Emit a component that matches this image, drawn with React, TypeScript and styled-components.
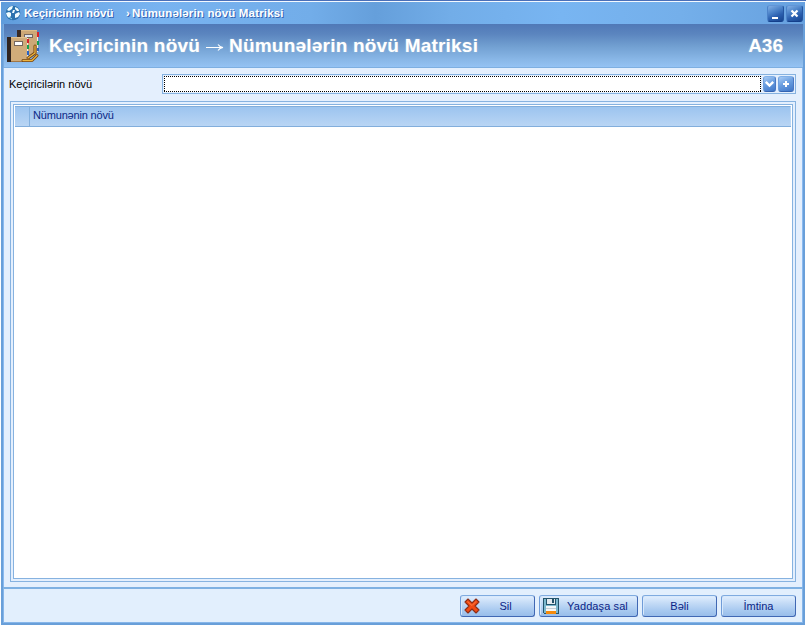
import React from "react";
import styled, { createGlobalStyle } from "styled-components";

const Global = createGlobalStyle`
  * { box-sizing: border-box; }
  body { margin: 0; background: #fff; overflow: hidden; }
`;

const Window = styled.div`
  width: 806px;
  height: 626px;
  display: flex;
  flex-direction: column;
  padding: 0 1px 1px;
  background: #fff;
  font-family: "Liberation Sans", Arial, sans-serif;
  font-size: 11px;
  color: #000;
  border-top: 1px solid #4a6fb8;
`;

const TitleBar = styled.header`
  flex: none;
  height: 23px;
  display: flex;
  align-items: center;
  padding: 0 2px 0 4px;
  border-top: 1px solid #f4f9ff;
  background: linear-gradient(90deg, #5f9cdb 0, #6faae8 60px, #78b3f0 160px, #72ade9 310px, #659fdb 375px, #72ade8 450px, #78b5f2 560px, #74afea 680px, #67a1df 804px);
`;

const TitleText = styled.h1`
  flex: 1;
  display: flex;
  margin: 0 0 0 3px;
  font-size: 11.5px;
  line-height: 20px;
  font-weight: bold;
  color: #fff;
  white-space: pre;
  text-shadow: 1px 1px 0 #3565b4;
`;

const TitlePart = styled.span<{ $w: number; $s?: number }>`
  display: block;
  width: ${(p) => p.$w}px;
  letter-spacing: ${(p) => p.$s ?? 0}px;
`;

const GlossButton = styled.button<{ $w: number; $h: number; $deep?: boolean }>`
  width: ${(p) => p.$w}px;
  height: ${(p) => p.$h}px;
  flex: none;
  padding: 0;
  display: flex;
  align-items: center;
  justify-content: center;
  border-radius: 3px;
  border: 1px solid;
  border-color: ${(p) => (p.$deep ? "#6195d7 #2455a0 #143f8b #4d83c9" : "#7fafe8 #4a78c4 #3564b2 #6f9fde")};
  background: ${(p) =>
    p.$deep
      ? "linear-gradient(155deg, #82b0e6 0%, #4b82c8 38%, #2a5eae 65%, #17458f 100%)"
      : "linear-gradient(155deg, #a9ccf5 0%, #6a9ee0 45%, #3f76c8 100%)"};

  svg { flex: none; }
`;

const WindowControls = styled.div`
  display: flex;
  gap: 2px;
`;

const Frame = styled.main`
  flex: 1;
  min-height: 0;
  display: flex;
  flex-direction: column;
  border: 2px solid #699fd9;
  border-top: 0;
`;

const Banner = styled.div`
  flex: none;
  height: 44px;
  display: flex;
  align-items: center;
  padding: 0 20px 0 3px;
  border-bottom: 1px solid #7eafe1;
  border-left: 1px solid #78abe0;
  background: linear-gradient(#5079b7 0, #5b85bf 10px, #719fd1 22px, #88b6e6 35px, #94c2f3 100%);
`;

const BannerText = styled.div<{ $s?: number }>`
  font-size: 19px;
  line-height: 42px;
  font-weight: bold;
  color: #fff;
  letter-spacing: ${(p) => p.$s ?? 0}px;
  white-space: pre;
  text-shadow: 0 0 2px rgba(190, 205, 210, 0.55);
`;

const BannerTitle = styled.div`
  flex: 1;
  display: flex;
  margin-left: 9px;
`;

const ArrowSlot = styled.span`
  width: 29px;
  display: flex;
  align-items: center;
  justify-content: center;
  padding-top: 4px;
`;

const Body = styled.section`
  flex: 1;
  min-height: 0;
  display: flex;
  flex-direction: column;
  padding: 6px 6px 5px;
  background: #e4effd;
  border: 1px solid #8abaf0;
  border-width: 0 1px;
`;

const Field = styled.div`
  flex: none;
  height: 20px;
  display: flex;
  align-items: center;
`;

const FieldLabel = styled.label`
  width: 152px;
  margin-left: -1px;
  line-height: 20px;
`;

const Combo = styled.div`
  flex: 1;
  height: 20px;
  display: flex;
  gap: 2px;
  padding: 1px;
  margin-left: 1px;
  border: 1px solid #86b2e0;
`;

const dots = (dir: string) => `repeating-linear-gradient(${dir}, #000 0 1px, #fff 1px 2px)`;

const ComboInput = styled.div`
  flex: 1;
  height: 16px;
  background:
    ${dots("90deg")} 0 0 / 100% 1px no-repeat,
    ${dots("90deg")} 0 100% / 100% 1px no-repeat,
    ${dots("180deg")} 0 0 / 1px 100% no-repeat,
    ${dots("180deg")} 100% 0 / 1px 100% no-repeat,
    #fff;
`;

const GridFrame = styled.div`
  flex: 1;
  min-height: 0;
  display: flex;
  margin-top: 7px;
  padding: 2px;
  border: 1px solid #86b2e0;
`;

const GridTable = styled.div`
  flex: 1;
  display: flex;
  flex-direction: column;
  border: 1px solid #86b2e0;
  background: #fff;
`;

const GridHeader = styled.div`
  flex: none;
  height: 22px;
  display: flex;
  margin: 0 1px;
  border-top: 1px solid #fff;
  border-bottom: 1px solid #82aedc;
`;

const HeaderCell = styled.div<{ $w?: number }>`
  flex: ${(p) => (p.$w ? "none" : 1)};
  width: ${(p) => (p.$w ? `${p.$w}px` : "auto")};
  padding-left: ${(p) => (p.$w ? 0 : 3)}px;
  border-top: 1px solid #82aedc;
  border-right: 1px solid ${(p) => (p.$w ? "#83b0de" : "#bcd7f5")};
  background: linear-gradient(#9cc4ef, #b9d5f4);
  color: #0a2886;
  line-height: 17px;
  letter-spacing: -0.17px;
`;

const Footer = styled.footer`
  flex: none;
  height: 36px;
  display: flex;
  justify-content: flex-end;
  gap: 4px;
  padding: 6px 6px 0 0;
  border: 1px solid #86b6ea;
  border-top: 2px solid #7eb0e2;
  background: #e2effd;
`;

const ActionButton = styled.button<{ $w?: number }>`
  width: ${(p) => p.$w ?? 75}px;
  height: 22px;
  display: flex;
  align-items: center;
  padding: 0 3px;
  border: 1px solid;
  border-color: #7fabe0 #4068b4 #4068b4 #6f9cd8;
  border-radius: 3px;
  background: linear-gradient(#e2effe 0, #c4dbf6 35%, #a9caf0 70%, #98bdea 100%);
  box-shadow: inset 1px 1px 0 #d8e9fc;
  color: #0a1f86;
  font: 11px "Liberation Sans", Arial, sans-serif;
`;

const ActionLabel = styled.span<{ $s?: number; $shift?: number }>`
  flex: 1;
  text-align: center;
  letter-spacing: ${(p) => p.$s ?? 0}px;
  padding-left: ${(p) => p.$shift ?? 0}px;
  white-space: nowrap;
`;

const GlobeIcon = () => (
  <svg width="16" height="16" viewBox="0 0 16 16">
    <circle cx="8" cy="8" r="7.3" fill="#2b72ae" />
    <path d="M2 5Q4 1 8 1L7 4 4 6ZM10 2Q14 3 14 6L12 6 10 4ZM1 8L4 7 6 8 6 11 4 13 2 11ZM8 5L10 5 9 8 7 8ZM10 9L14 7 15 9 13 12 10 13Z" fill="#f0fcff" />
    <path d="M4 12L7 14" stroke="#8fd5ea" />
  </svg>
);

const BinderIcon = () => (
  <svg width="33" height="34" viewBox="0 0 33 34" shapeRendering="crispEdges">
    <path d="M10 1H30V26H10Z" fill="#cda877" />
    <path d="M10 1H14V8H10Z" fill="#3a2b24" />
    <path d="M14 1H30V2H14Z" fill="#dfbd88" />
    <path d="M17 5H26V9H17Z" fill="#75675f" />
    <path d="M18 6H25V8H18Z" fill="#dfe5ee" />
    <path d="M30 4H31V23H30Z" fill="#f4eee4" />
    <path d="M30 3H32V8H30Z" fill="#d8202b" />
    <path d="M30 12H32V16H30Z" fill="#16a052" />
    <path d="M30 19H32V22H30Z" fill="#3162bd" />
    <path d="M0 8H20V33H0Z" fill="#d0ac7a" />
    <path d="M0 8H4V33H0Z" fill="#30241f" />
    <path d="M4 8H20V9H4Z" fill="#e3c392" />
    <path d="M4 32H20V33H4Z" fill="#a17644" />
    <path d="M7 12H16V17H7Z" fill="#75675f" />
    <path d="M8 13H15V16H8Z" fill="#fff" />
    <path d="M20 9H21V29H20Z" fill="#f4eee4" />
    <path d="M20 10H22V14H20Z" fill="#d8202b" />
    <path d="M20 16H22V20H20Z" fill="#16a052" />
    <path d="M20 22H22V26H20Z" fill="#2763c8" />
    <g shapeRendering="auto" fill="none" strokeLinecap="round" strokeLinejoin="round">
      <path d="M16 31.5H25L30 26.5M21 29L28 24V17" stroke="#704112" strokeWidth="3" />
      <path d="M16 31.5H25L30 26.5M21 29L28 24V17" stroke="#edb541" strokeWidth="1.3" />
    </g>
  </svg>
);

const ArrowIcon = () => (
  <svg width="19" height="9" viewBox="0 0 19 9">
    <path d="M1 4.5H17M13 1.5C14 3 16 4.2 18 4.5C16 4.8 14 6 13 7.5" fill="none" stroke="#fff" strokeWidth="1.1" />
  </svg>
);

const MinimizeIcon = () => (
  <svg width="15" height="15" viewBox="0 0 15 15"><path d="M4 11H10V13H4Z" fill="#fff" /></svg>
);
const CloseIcon = () => (
  <svg width="15" height="15" viewBox="0 0 15 15"><path d="M4.5 4.5L10.5 10.5M10.5 4.5L4.5 10.5" stroke="#fff" strokeWidth="2.2" /></svg>
);
const ChevronIcon = () => (
  <svg width="11" height="14" viewBox="0 0 11 14"><path d="M1.8 4.8L5.5 8.5 9.2 4.8" fill="none" stroke="#fff" strokeWidth="2.4" /></svg>
);
const PlusIcon = () => (
  <svg width="14" height="14" viewBox="0 0 14 14" shapeRendering="crispEdges"><path d="M6 4H8V6H10V8H8V10H6V8H4V6H6Z" fill="#fff" /></svg>
);
const CrossIcon = () => (
  <svg width="16" height="16" viewBox="0 0 16 16">
    <path d="M4 1L8 5 12 1 15 4 11 8 15 12 12 15 8 11 4 15 1 12 5 8 1 4Z" fill="#f24a12" stroke="#8c2d16" strokeWidth="1.1" strokeLinejoin="round" />
    <path d="M3.5 3.5L8 7.5 12 3.5" fill="none" stroke="#ff7a40" />
  </svg>
);
const DiskIcon = () => (
  <svg width="16" height="16" viewBox="0 0 16 16" shapeRendering="crispEdges">
    <path d="M0 0H16V16H1L0 15Z" fill="#24546b" />
    <path d="M1 1H15V15H1Z" fill="#7db8ce" />
    <path d="M3 0H13V7H3Z" fill="#24546b" />
    <path d="M4 1H12V6H4Z" fill="#e3eaef" />
    <path d="M9 1H11V5H9Z" fill="#245066" />
    <path d="M3 8H13V16H3Z" fill="#f4f6f7" />
    <path d="M3 10H13V11H3Z" fill="#c3ccd3" />
    <path d="M3 13H13V16H3Z" fill="#f58a0b" />
  </svg>
);

export default function App() {
  return (
    <>
      <Global />
      <Window>
        <TitleBar>
          <GlobeIcon />
          <TitleText>
            <TitlePart $w={102}>Keçiricinin növü</TitlePart>
            <TitlePart $w={6}>›</TitlePart>
            <TitlePart $w={170} $s={0.16}>Nümunələrin növü Matriksi</TitlePart>
          </TitleText>
          <WindowControls>
            <GlossButton $w={17} $h={17} $deep aria-label="Minimize"><MinimizeIcon /></GlossButton>
            <GlossButton $w={17} $h={17} $deep aria-label="Close"><CloseIcon /></GlossButton>
          </WindowControls>
        </TitleBar>
        <Frame>
          <Banner>
            <BinderIcon />
            <BannerTitle>
              <BannerText $s={0.2}>Keçiricinin növü</BannerText>
              <ArrowSlot><ArrowIcon /></ArrowSlot>
              <BannerText $s={0.21}>Nümunələrin növü Matriksi</BannerText>
            </BannerTitle>
            <BannerText>A36</BannerText>
          </Banner>
          <Body>
            <Field>
              <FieldLabel>Keçiricilərin növü</FieldLabel>
              <Combo>
                <ComboInput />
                <GlossButton $w={13} $h={16} aria-label="Open list"><ChevronIcon /></GlossButton>
                <GlossButton $w={16} $h={16} aria-label="Add"><PlusIcon /></GlossButton>
              </Combo>
            </Field>
            <GridFrame>
              <GridTable>
                <GridHeader>
                  <HeaderCell $w={15} />
                  <HeaderCell>Nümunənin növü</HeaderCell>
                </GridHeader>
              </GridTable>
            </GridFrame>
          </Body>
          <Footer>
            <ActionButton><CrossIcon /><ActionLabel>Sil</ActionLabel></ActionButton>
            <ActionButton $w={99}><DiskIcon /><ActionLabel $s={0.1} $shift={2}>Yaddaşa sal</ActionLabel></ActionButton>
            <ActionButton><ActionLabel>Bəli</ActionLabel></ActionButton>
            <ActionButton><ActionLabel>İmtina</ActionLabel></ActionButton>
          </Footer>
        </Frame>
      </Window>
    </>
  );
}
